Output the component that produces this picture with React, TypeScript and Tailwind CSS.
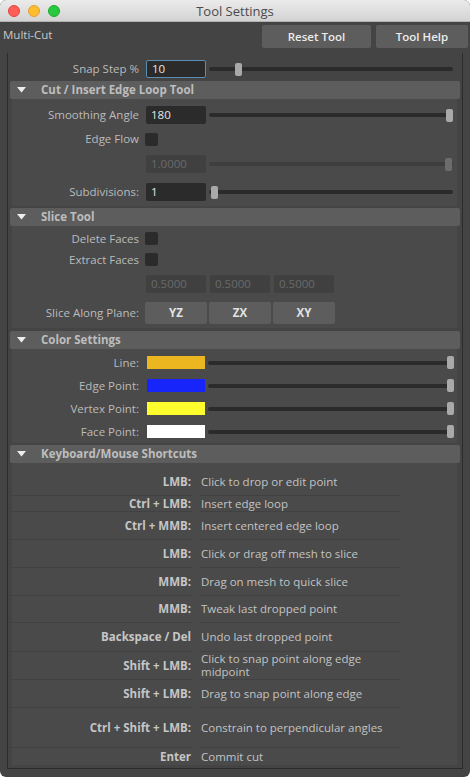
import React from "react";

const FONT = "font-['Open_Sans','DejaVu_Sans',sans-serif]";

function Slider({ pos, disabled = false }: { pos: number; disabled?: boolean }) {
  return (
    <div className="relative ml-[3px] flex h-[13px] w-[244px] items-center">
      <div className={`h-[4px] w-full rounded-full ${disabled ? "bg-[#3e3e3e]" : "bg-[#2b2b2b]"}`} />
      <div
        className={`absolute top-0 h-[13px] w-[7px] rounded-[2px] ${disabled ? "bg-[#6c6c6c]" : "bg-[#a9a9a9]"}`}
        style={{ left: pos }}
      />
    </div>
  );
}

function Label({ children, disabled = false }: { children?: React.ReactNode; disabled?: boolean }) {
  return (
    <div className={`w-[127px] shrink-0 text-right ${disabled ? "text-[#6e6e6e]" : "text-[#bbbbbb]"}`}>
      {children}
    </div>
  );
}

function Field({ value, focus = false, disabled = false, ml = "ml-[7px]" }: { value: string; focus?: boolean; disabled?: boolean; ml?: string }) {
  return (
    <div
      className={`${ml} flex h-[18px] w-[60px] shrink-0 items-center rounded-[2px] pl-[5px] ${
        focus
          ? "border border-[#5a8db3] bg-[#2b2b2b] text-[#e6e6e6]"
          : disabled
          ? "bg-[#404040] text-[#6a6a6a]"
          : "bg-[#2b2b2b] text-[#e6e6e6]"
      }`}
    >
      {value}
    </div>
  );
}

function Checkbox() {
  return <div className="ml-[6px] h-[13px] w-[13px] shrink-0 rounded-[2px] bg-[#2b2b2b]" />;
}

function Header({ title }: { title: string }) {
  return (
    <div className="ml-[2px] flex h-[18px] w-[450px] items-center rounded-[2px] bg-[#5d5d5d]">
      <svg width="9" height="6" viewBox="0 0 9 6" className="ml-[7px]">
        <polygon points="0,0 9,0 4.5,5.5" fill="#ededed" />
      </svg>
      <span className="ml-[15px] font-bold text-[#bdbdbd]">{title}</span>
    </div>
  );
}

function Panel({ children, className = "" }: { children: React.ReactNode; className?: string }) {
  return <div className={`ml-[4px] w-[445px] bg-[#4a4a4a] ${className}`}>{children}</div>;
}

const shortcuts: { k: string; d: string; h: number }[] = [
  { k: "LMB:", d: "Click to drop or edit point", h: 28 },
  { k: "Ctrl + LMB:", d: "Insert edge loop", h: 16 },
  { k: "Ctrl + MMB:", d: "Insert centered edge loop", h: 28 },
  { k: "LMB:", d: "Click or drag off mesh to slice", h: 28 },
  { k: "MMB:", d: "Drag on mesh to quick slice", h: 28 },
  { k: "MMB:", d: "Tweak last dropped point", h: 27 },
  { k: "Backspace / Del", d: "Undo last dropped point", h: 29 },
  { k: "Shift + LMB:", d: "Click to snap point along edge midpoint", h: 28 },
  { k: "Shift + LMB:", d: "Drag to snap point along edge", h: 28 },
  { k: "Ctrl + Shift + LMB:", d: "Constrain to perpendicular angles", h: 40 },
  { k: "Enter", d: "Commit cut", h: 17 },
];

export default function App() {
  return (
    <div className={`h-[779px] w-[470px] bg-white ${FONT} text-[11.5px] leading-[14px]`}>
      <div className="flex h-[777px] w-[470px] flex-col overflow-hidden rounded-[6px] bg-[#444444]">
        {/* Title bar */}
        <div className="relative flex h-[22px] shrink-0 items-center justify-center border-b border-[#b1b1b1] bg-gradient-to-b from-[#ebebeb] to-[#d3d3d3]">
          <div className="absolute left-[8px] top-[5px] flex gap-[8px]">
            <div className="h-[12px] w-[12px] rounded-full border border-[#e0443e] bg-[#fd5f57]" />
            <div className="h-[12px] w-[12px] rounded-full border border-[#dea236] bg-[#febc2e]" />
            <div className="h-[12px] w-[12px] rounded-full border border-[#1aab29] bg-[#28c840]" />
          </div>
          <span className="text-[13px] text-[#4b4b4b]">Tool Settings</span>
        </div>

        {/* Top row */}
        <div className="flex h-[31px] shrink-0 items-start">
          <span className="ml-[3px] mt-[6px] text-[#c9c9c9]">Multi-Cut</span>
          <div className="ml-auto mr-[2px] mt-[3px] flex gap-[5px]">
            <div className="flex h-[23px] w-[109px] items-center justify-center rounded-[2px] bg-[#5d5d5d] font-semibold text-[#ececec]">
              Reset Tool
            </div>
            <div className="flex h-[23px] w-[92px] items-center justify-center rounded-[2px] bg-[#5d5d5d] font-semibold text-[#ececec]">
              Tool Help
            </div>
          </div>
        </div>

        {/* Scroll frame */}
        <div className="ml-[7px] flex h-[716px] w-[456px] shrink-0 flex-col border-x border-b border-[#2c2c2c]">
          {/* Snap step */}
          <div className="ml-[4px] mt-[7px] flex h-[18px] items-center">
            <Label>Snap Step %</Label>
            <Field value="10" focus />
            <Slider pos={26} />
          </div>
          <div className="mt-[3px]">
            <Header title="Cut / Insert Edge Loop Tool" />
          </div>
          <Panel className="h-[107px] pt-[7px]">
            <div className="flex h-[18px] items-center">
              <Label>Smoothing Angle</Label>
              <Field value="180" />
              <Slider pos={237} />
            </div>
            <div className="mt-[6px] flex h-[18px] items-center">
              <Label>Edge Flow</Label>
              <Checkbox />
            </div>
            <div className="mt-[7px] flex h-[18px] items-center">
              <Label />
              <Field value="1.0000" disabled />
              <Slider pos={236} disabled />
            </div>
            <div className="mt-[10px] flex h-[18px] items-center">
              <Label>Subdivisions:</Label>
              <Field value="1" />
              <Slider pos={2} />
            </div>
          </Panel>

          <div className="mt-[2px]">
            <Header title="Slice Tool" />
          </div>
          <Panel className="h-[102px] pt-[6px]">
            <div className="flex h-[13px] items-center">
              <Label>Delete Faces</Label>
              <Checkbox />
            </div>
            <div className="mt-[8px] flex h-[13px] items-center">
              <Label>Extract Faces</Label>
              <Checkbox />
            </div>
            <div className="mt-[9px] flex h-[18px] items-center">
              <Label />
              <Field value="0.5000" disabled />
              <Field value="0.5000" disabled ml="ml-[4px]" />
              <Field value="0.5000" disabled ml="ml-[4px]" />
            </div>
            <div className="mt-[9px] flex h-[22px] items-center">
              <Label>Slice Along Plane:</Label>
              <div className="ml-[6px] flex gap-[2px]">
                {["YZ", "ZX", "XY"].map((p) => (
                  <div
                    key={p}
                    className="flex h-[22px] w-[62px] items-center justify-center rounded-[2px] bg-[#5d5d5d] font-bold text-[#e2e2e2]"
                  >
                    {p}
                  </div>
                ))}
              </div>
            </div>
          </Panel>

          <div className="mt-[3px]">
            <Header title="Color Settings" />
          </div>
          <Panel className="h-[94px] pt-[7px]">
            {[
              { l: "Line:", c: "bg-[#ecb621]" },
              { l: "Edge Point:", c: "bg-[#1725fb]" },
              { l: "Vertex Point:", c: "bg-[#fdfc2c]" },
              { l: "Face Point:", c: "bg-[#ffffff]" },
            ].map((r, i) => (
              <div key={i} className={`flex h-[13px] items-center ${i > 0 ? "mt-[10px]" : ""}`}>
                <Label>{r.l}</Label>
                <div className={`ml-[8px] h-[13px] w-[58px] shrink-0 ${r.c}`} />
                <Slider pos={239} />
              </div>
            ))}
          </Panel>

          <div className="mt-[2px]">
            <Header title="Keyboard/Mouse Shortcuts" />
          </div>
          <Panel className="h-[302px] pt-[5px]">
            {shortcuts.map((s, i) => (
              <div key={i} className="flex" style={{ height: s.h }}>
                <div
                  className={`flex w-[180px] shrink-0 items-center justify-end pr-[1px] font-bold text-[#c6c6c6] ${
                    i < shortcuts.length - 1 ? "border-b border-[#414141]" : ""
                  }`}
                >
                  {s.k}
                </div>
                <div
                  className={`ml-[8px] flex w-[200px] shrink-0 items-center pl-[1px] text-[#c3c3c3] ${
                    i < shortcuts.length - 1 ? "border-b border-[#414141]" : ""
                  } ${s.d.length > 34 ? "leading-[12.7px]" : ""}`}
                >
                  <span>{s.d}</span>
                </div>
              </div>
            ))}
          </Panel>
        </div>
      </div>
    </div>
  );
}
